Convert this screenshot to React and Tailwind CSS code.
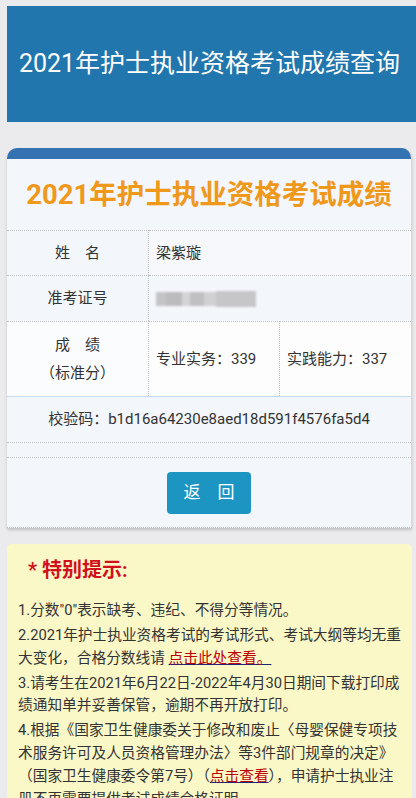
export default function App() {
  const font = { fontFamily: '"Roboto", "Noto Sans CJK SC", sans-serif' };

  return (
    <div className="min-h-screen bg-[#ebebed] pl-[7px] pt-[6px] text-[#333]" style={font}>
      {/* Header */}
      <div className="flex h-[116px] items-center justify-center bg-[#2176ad]">
        <h1 className="pr-[4px] text-[25px] font-normal text-white">
          2021年护士执业资格考试成绩查询
        </h1>
      </div>

      {/* Result card */}
      <div className="mr-[4px] mt-[26px] overflow-hidden rounded-t-[10px] border-b border-r border-dotted border-[#bbb] bg-[#f3f6fb] shadow-[0_2px_3px_rgba(0,0,0,0.18)]">
        <div className="h-[11px] bg-[#3572b2]" />
        <div className="flex h-[71px] items-center justify-center">
          <h2 className="text-[27.5px] font-bold text-[#ef981a]">
            2021年护士执业资格考试成绩
          </h2>
        </div>

        <div className="grid grid-cols-[142px_131px_1fr] text-[15px]">
          <div className="flex h-[45px] items-center justify-center border-t border-r border-dotted border-[#c2c2c2]">
            姓　名
          </div>
          <div className="col-span-2 flex items-center border-t border-dotted border-[#c2c2c2] bg-[#f6f8fc] pl-[7px]">
            梁紫璇
          </div>

          <div className="flex h-[46px] items-center justify-center border-t border-r border-dotted border-[#c2c2c2]">
            准考证号
          </div>
          <div className="col-span-2 flex items-center border-t border-dotted border-[#c2c2c2] pl-[7px]">
            <div className="flex h-[16px] items-center blur-[1.2px]">
              <span className="h-[14px] w-[10px] bg-[#c4c4c6]" />
              <span className="h-[14px] w-[16px] bg-[#bcbcbe]" />
              <span className="h-[14px] w-[8px] bg-[#d4d4d6]" />
              <span className="h-[14px] w-[14px] bg-[#c0c0c2]" />
              <span className="h-[14px] w-[12px] bg-[#d0d0d2]" />
              <span className="h-[16px] w-[40px] bg-[#c6c6c8]" />
            </div>
          </div>

          <div className="flex h-[75px] flex-col items-center justify-center border-t border-r border-dotted border-[#c2c2c2] bg-[#fbfcfe] leading-[28px]">
            <span>成　绩</span>
            <span>（标准分）</span>
          </div>
          <div className="flex items-center border-t border-r border-dotted border-[#c2c2c2] bg-[#fdfdfe] pl-[7px]">
            专业实务：339
          </div>
          <div className="flex items-center border-t border-dotted border-[#c2c2c2] bg-[#fdfdfe] pl-[7px]">
            实践能力：337
          </div>

          <div className="col-span-3 flex h-[46px] items-center justify-center border-t border-[#c4dbee]">
            校验码：b1d16a64230e8aed18d591f4576fa5d4
          </div>
          <div className="col-span-3 h-[15px] border-t border-dotted border-[#c2c2c2]" />
          <div className="col-span-3 flex h-[70px] justify-center border-t border-dotted border-[#c2c2c2] pt-[14px]">
            <button className="h-[42px] w-[84px] rounded-[4px] bg-[#1c95c3] text-[17px] text-white">
              返　回
            </button>
          </div>
        </div>
      </div>

      {/* Notice */}
      <div className="mr-[4px] mt-[16px] rounded-t-[5px] bg-[#fbf8c7] pb-4 pl-[11px] pr-[6px] pt-[12px] text-[14.7px] leading-[22.7px]">
        <p className="pl-[10px] text-[20px] font-bold leading-[28px] text-[#d0111b]">
          * 特别提示:
        </p>
        <div className="mt-[15px] flex flex-col gap-[2.3px]">
          <p>1.分数"0"表示缺考、违纪、不得分等情况。</p>
          <p>
            2.2021年护士执业资格考试的考试形式、考试大纲等均无重大变化，合格分数线请{" "}
            <a className="text-[#b00] underline decoration-[#1a237e]">点击此处查看。</a>
          </p>
          <p>
            3.请考生在2021年6月22日-2022年4月30日期间下载打印成绩通知单并妥善保管，逾期不再开放打印。
          </p>
          <p>
            4.根据《国家卫生健康委关于修改和废止〈母婴保健专项技术服务许可及人员资格管理办法〉等3件部门规章的决定》（国家卫生健康委令第7号）（
            <a className="text-[#b00] underline decoration-[#1a237e]">点击查看</a>
            ），申请护士执业注册不再需要提供考试成绩合格证明。
          </p>
        </div>
      </div>
    </div>
  );
}
